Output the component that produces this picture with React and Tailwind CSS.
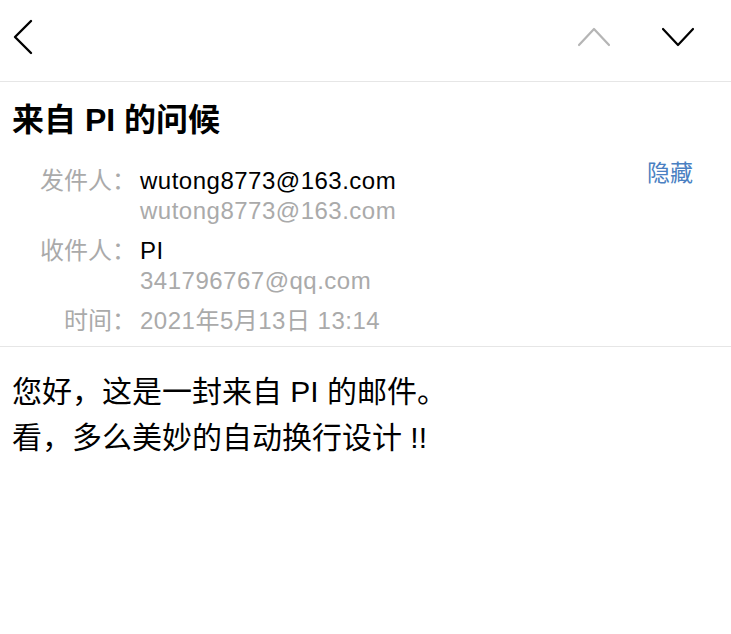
const font = { fontFamily: '"Liberation Sans", "Noto Sans CJK SC", sans-serif' };

function Row({ label, children }) {
   return (
      <div className="flex">
         <div className="w-[136px] shrink-0 text-right text-[24px] text-[#aaaaaa]">{label}</div>
         <div className="pl-1 flex flex-col tracking-[0.5px]">{children}</div>
      </div>
   );
}

export default function App() {
   return (
      <div className="w-[731px] h-[634px] bg-white text-black" style={font}>
         <div className="h-[82px] border-b border-[#e6e6e6] flex items-center px-[8px]">
            <svg className="w-[30px] h-[40px] -mt-[8px]" viewBox="0 0 30 40" fill="none">
               <polyline points="23,4 7,20 23,36" stroke="#000" strokeWidth="2.4" strokeLinecap="round" strokeLinejoin="round" />
            </svg>
            <div className="ml-auto flex items-center gap-[50px] pr-[28px] -mt-[8px]">
               <svg className="w-[34px] h-[20px]" viewBox="0 0 34 20" fill="none">
                  <polyline points="2,18 17,2 32,18" stroke="#b5b5b5" strokeWidth="2.2" strokeLinecap="round" strokeLinejoin="round" />
               </svg>
               <svg className="w-[34px] h-[20px]" viewBox="0 0 34 20" fill="none">
                  <polyline points="2,2 17,18 32,2" stroke="#000" strokeWidth="2.2" strokeLinecap="round" strokeLinejoin="round" />
               </svg>
            </div>
         </div>

         <div className="border-b border-[#e6e6e6] pb-[10px]">
            <h1 className="px-[12px] pt-[18px] text-[32px] leading-[40px] font-bold">来自 PI 的问候</h1>
            <div className="relative mt-[26px] flex flex-col gap-[10px] text-[24px] leading-[30px]">
               <span className="absolute right-[38px] top-[-8px] text-[23px] text-[#4a80c2]">隐藏</span>
               <Row label="发件人：">
                  <span>wutong8773@163.com</span>
                  <span className="text-[#aaaaaa]">wutong8773@163.com</span>
               </Row>
               <Row label="收件人：">
                  <span>PI</span>
                  <span className="text-[#aaaaaa]">341796767@qq.com</span>
               </Row>
               <Row label="时间：">
                  <span className="text-[#aaaaaa]">2021年5月13日 13:14</span>
               </Row>
            </div>
         </div>

         <div className="px-[12px] pt-[22px] text-[30px] leading-[46px]">
            <p>您好，这是一封来自 PI 的邮件。</p>
            <p>看，多么美妙的自动换行设计 !!</p>
         </div>
      </div>
   );
}
